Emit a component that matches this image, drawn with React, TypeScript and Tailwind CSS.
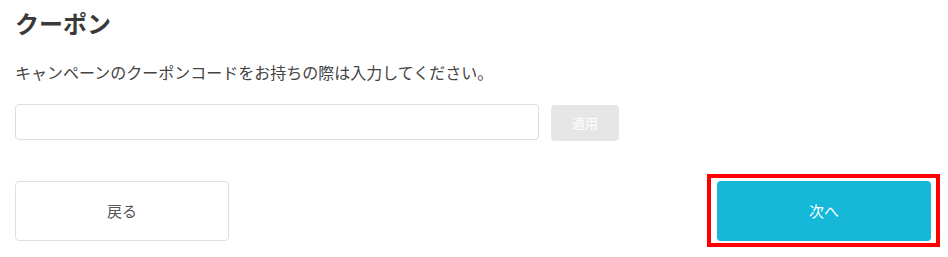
export default function App() {
  return (
    <div
      className="relative w-[948px] h-[257px] bg-white px-[15px] pt-[5px] text-[#444]"
      style={{ fontFamily: '"Noto Sans CJK JP", "Noto Sans", sans-serif' }}
    >
      {/* 見出し */}
      <h2 className="text-[24px] leading-[36px] font-bold text-[#3a3a3a]">クーポン</h2>

      {/* 説明 */}
      <p className="mt-[19px] text-[16px] leading-[24px] text-[#444]">
        キャンペーンのクーポンコードをお持ちの際は入力してください。
      </p>

      {/* 入力 */}
      <div className="mt-[20px] flex items-start gap-[12px]">
        <input
          type="text"
          className="w-[524px] h-[36px] rounded-[4px] border border-[#dedede] bg-white px-3 text-[15px] outline-none"
        />
        <button className="mt-[1px] w-[68px] h-[36px] rounded-[4px] bg-[#e6e6e6] text-[13px] text-white">
          適用
        </button>
      </div>

      {/* ボタン */}
      <div className="mt-[40px] flex justify-between pr-[2px]">
        <button className="w-[214px] h-[60px] rounded-[4px] border border-[#e0e0e0] bg-white text-[15px] text-[#555]">
          戻る
        </button>
        <button className="w-[214px] h-[60px] rounded-[4px] bg-[#16b8d9] text-[15px] text-white">
          次へ
        </button>
      </div>

      {/* 注釈枠 */}
      <div className="absolute left-[707px] top-[174px] w-[233px] h-[73px] border-[4px] border-[#ff0000] pointer-events-none" />
    </div>
  )
}
